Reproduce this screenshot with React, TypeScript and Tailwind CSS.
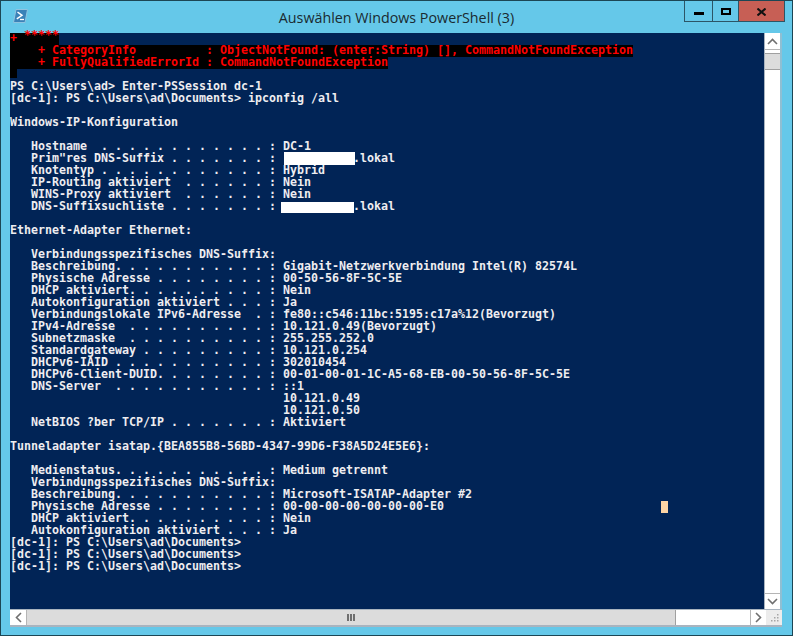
import React from "react";

const lines = [
  "PS C:\\Users\\ad> Enter-PSSession dc-1",
  "[dc-1]: PS C:\\Users\\ad\\Documents> ipconfig /all",
  "",
  "Windows-IP-Konfiguration",
  "",
  "   Hostname  . . . . . . . . . . . . : DC-1",
  "   Prim\"res DNS-Suffix . . . . . . . :           .lokal",
  "   Knotentyp . . . . . . . . . . . . : Hybrid",
  "   IP-Routing aktiviert  . . . . . . : Nein",
  "   WINS-Proxy aktiviert  . . . . . . : Nein",
  "   DNS-Suffixsuchliste . . . . . . . :           .lokal",
  "",
  "Ethernet-Adapter Ethernet:",
  "",
  "   Verbindungsspezifisches DNS-Suffix:",
  "   Beschreibung. . . . . . . . . . . : Gigabit-Netzwerkverbindung Intel(R) 82574L",
  "   Physische Adresse . . . . . . . . : 00-50-56-8F-5C-5E",
  "   DHCP aktiviert. . . . . . . . . . : Nein",
  "   Autokonfiguration aktiviert . . . : Ja",
  "   Verbindungslokale IPv6-Adresse  . : fe80::c546:11bc:5195:c17a%12(Bevorzugt)",
  "   IPv4-Adresse  . . . . . . . . . . : 10.121.0.49(Bevorzugt)",
  "   Subnetzmaske  . . . . . . . . . . : 255.255.252.0",
  "   Standardgateway . . . . . . . . . : 10.121.0.254",
  "   DHCPv6-IAID . . . . . . . . . . . : 302010454",
  "   DHCPv6-Client-DUID. . . . . . . . : 00-01-00-01-1C-A5-68-EB-00-50-56-8F-5C-5E",
  "   DNS-Server  . . . . . . . . . . . : ::1",
  "                                       10.121.0.49",
  "                                       10.121.0.50",
  "   NetBIOS ?ber TCP/IP . . . . . . . : Aktiviert",
  "",
  "Tunneladapter isatap.{BEA855B8-56BD-4347-99D6-F38A5D24E5E6}:",
  "",
  "   Medienstatus. . . . . . . . . . . : Medium getrennt",
  "   Verbindungsspezifisches DNS-Suffix:",
  "   Beschreibung. . . . . . . . . . . : Microsoft-ISATAP-Adapter #2",
  "   Physische Adresse . . . . . . . . : 00-00-00-00-00-00-00-E0",
  "   DHCP aktiviert. . . . . . . . . . : Nein",
  "   Autokonfiguration aktiviert . . . : Ja",
  "[dc-1]: PS C:\\Users\\ad\\Documents>",
  "[dc-1]: PS C:\\Users\\ad\\Documents>",
  "[dc-1]: PS C:\\Users\\ad\\Documents>",
];

const errorLines = [
  "    + CategoryInfo          : ObjectNotFound: (enter:String) [], CommandNotFoundException",
  "    + FullyQualifiedErrorId : CommandNotFoundException",
];

const Chevron = ({ d }: { d: string }) => (
  <svg width="11" height="11" viewBox="0 0 11 11" fill="none" stroke="#6f6f6f" strokeWidth="1.6">
    <path d={d} />
  </svg>
);

const App: React.FC = () => {
  return (
    <div className="w-[793px] h-[636px] bg-[#65c8e9] border border-[#1c4654] flex flex-col pl-[9px] pr-[10px] overflow-hidden">
      {/* title bar */}
      <div className="h-[32px] shrink-0 -mr-[10px] -ml-[9px] grid grid-cols-[1fr_auto_1fr] items-start">
        <svg className="ml-[12px] mt-[8px]" width="15" height="14" viewBox="0 0 15 14">
          <path d="M3 .5h11.5L12 13.5H.5z" fill="#3a82b8" stroke="#8fc4e0" />
          <path d="M4.5 3l4.5 3.3L3.8 9.8" fill="none" stroke="#fff" strokeWidth="1.5" />
          <path d="M7 10.5h4" stroke="#fff" strokeWidth="1.3" />
        </svg>
        <div className="pt-[7px] text-[14.3px] leading-[20px] text-[#1a2a30] font-['Open_Sans',sans-serif] whitespace-nowrap">
          Auswählen Windows PowerShell (3)
        </div>
        <div className="flex justify-end pr-[7px]">
          <div className="flex h-[21px] border-b border-x border-[#2c5566]">
            <div className="w-[27px] flex items-center justify-center">
              <div className="w-[10px] h-[3px] bg-black mt-[5px]" />
            </div>
            <div className="w-[26px] border-l border-[#2c5566] flex items-center justify-center">
              <div className="w-[10px] h-[7px] border-2 border-black mt-px" />
            </div>
            <div className="w-[46px] bg-[#c75f55] flex items-center justify-center border-l border-[#2c5566]">
              <svg width="9" height="8" viewBox="0 0 9 8" stroke="#111" strokeWidth="2" className="mt-px">
                <path d="M0.5 0.5l8 7M8.5 0.5l-8 7" />
              </svg>
            </div>
          </div>
        </div>
      </div>

      {/* console + vertical scrollbar */}
      <div className="flex h-[576px] shrink-0">
        <div className="relative w-[756px] bg-[#012456] font-['DejaVu_Sans_Mono',monospace] font-bold text-[11.63px] leading-[10px] text-[#eeedf0] whitespace-pre">
          <div className="h-[12px]">
            <span className="bg-black text-[#ff0000] inline-block h-[12px]">
              {"+ "}
              <span className="inline-block -translate-y-[3px]">*****</span>
            </span>
          </div>
          {errorLines.map((line) => (
            <div key={line} className="h-[12px]">
              <span className="bg-black text-[#ff0000] inline-block h-[12px]">{line}</span>
            </div>
          ))}
          <div className="h-[12px]">
            <div className="w-[7px] h-[9px] bg-black" />
          </div>
          {lines.map((line, i) => (
            <div key={i} className="h-[12px]">
              {line}
            </div>
          ))}
          {/* blacked out parts of the screenshot */}
          <div className="absolute left-[274px] top-[119px] w-[71px] h-[13px] bg-white" />
          <div className="absolute left-[271px] top-[169px] w-[73px] h-[11px] bg-white" />
          {/* cursor */}
          <div className="absolute left-[651px] top-[468px] w-[7px] h-[12px] bg-[#fdd5a5]" />
        </div>
        <div className="w-[18px] flex flex-col bg-white border-l border-[#a9b4bf] border-r-2 border-r-[#8fbfd3]">
          <div className="h-[17px] shrink-0 flex items-center justify-center border-b border-[#b5b5b5]">
            <Chevron d="M1 8l4.5-4.5L10 8" />
          </div>
          <div className="h-[17px] mt-[3px] shrink-0 bg-[#dcdcdc] border-y border-[#a0a0a0]" />
          <div className="flex-1" />
          <div className="h-[16px] shrink-0 flex items-center justify-center border-t border-[#b5b5b5]">
            <Chevron d="M1 3l4.5 4.5L10 3" />
          </div>
        </div>
      </div>

      {/* horizontal scrollbar */}
      <div className="flex h-[18px] shrink-0 bg-white border-t border-b-2 border-[#a9b4bf]">
        <div className="w-[17px] shrink-0 flex items-center justify-center border-r border-[#b5b5b5]">
          <Chevron d="M8 1L3.5 5.5 8 10" />
        </div>
        <div className="w-[649px] shrink-0 bg-[#dcdcdc] border-r border-[#a0a0a0] flex items-center justify-center gap-px">
          <div className="w-[2px] h-[7px] bg-[#6f6f6f]" />
          <div className="w-[2px] h-[7px] bg-[#6f6f6f]" />
          <div className="w-[2px] h-[7px] bg-[#6f6f6f]" />
        </div>
        <div className="flex-1" />
        <div className="w-[16px] shrink-0 flex items-center justify-center border-l border-[#b5b5b5]">
          <Chevron d="M3 1l4.5 4.5L3 10" />
        </div>
        <div className="w-[16px] shrink-0 bg-[#ececec] flex items-end justify-end p-[2px]">
          <svg width="10" height="10" viewBox="0 0 10 10" fill="#a5a5a5">
            <rect x="7" y="1" width="1.5" height="1.5" />
            <rect x="7" y="4" width="1.5" height="1.5" />
            <rect x="4" y="4" width="1.5" height="1.5" />
            <rect x="7" y="7" width="1.5" height="1.5" />
            <rect x="4" y="7" width="1.5" height="1.5" />
            <rect x="1" y="7" width="1.5" height="1.5" />
          </svg>
        </div>
      </div>
    </div>
  );
};

export default App;
